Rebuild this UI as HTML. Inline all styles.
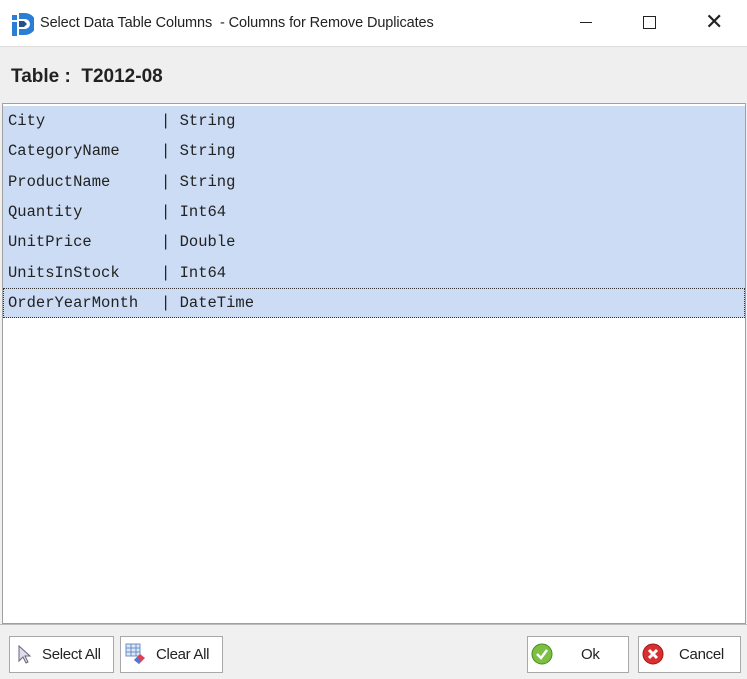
<!DOCTYPE html>
<html><head><style>
*{margin:0;padding:0;box-sizing:border-box}
body{width:747px;height:679px;background:#f0f0f0;position:relative;overflow:hidden;font-family:"Liberation Sans",sans-serif}
.title{position:absolute;left:0;top:0;width:747px;height:47px;background:#fff;border-bottom:1px solid #ddd}
.title .t{position:absolute;left:40px;top:15px;font-size:14.5px;color:#222;letter-spacing:-0.1px}
.hdr{position:absolute;left:0;top:47px;width:747px;height:56px;background:#efefef}
.hdr .t{position:absolute;left:11px;top:19px;font-size:19px;font-weight:bold;color:#222}
.list{position:absolute;left:2px;top:103px;width:744px;height:521px;background:#fff;border:1px solid #a0a0a0}
.sel{position:absolute;left:0;top:2px;width:742px;height:212px;background:#ccdcf4}
.row{position:absolute;left:0;width:742px;height:30px;font-family:"Liberation Mono",monospace;font-size:15.5px;line-height:30px;color:#222;white-space:pre}
.row span{position:absolute}
.foot{position:absolute;left:0;top:624px;width:747px;height:55px;background:#f0f0f0;border-top:1px solid #bbb}
.btn{position:absolute;top:636px;height:37px;background:#fff;border:1px solid #a8a8a8;font-size:15px;color:#222;letter-spacing:-0.3px}
.btn .l{position:absolute;top:9px}
</style></head><body>
<div class="title">
<svg style="position:absolute;left:12px;top:12px" width="22" height="24" viewBox="0 0 22 24"><rect x="0" y="3" width="5" height="5" fill="#2a7fd4"/><rect x="0" y="10" width="5" height="14" fill="#2a7fd4"/><path d="M7 1h6a8 8 0 0 1 0 22h-6v-6h6a2 2 0 0 0 0-10h-6z" fill="#2a7fd4"/><path d="M7 9h5l3 3-3 3h-5z" fill="#2a4e8a"/></svg>
<div class="t">Select Data Table Columns &nbsp;- Columns for Remove Duplicates</div>
<div style="position:absolute;left:580px;top:22px;width:12px;height:1px;background:#222"></div>
<div style="position:absolute;left:643px;top:16px;width:13px;height:13px;border:1px solid #222"></div>
<div style="position:absolute;left:705px;top:9px;font-size:22px;color:#222">✕</div>
</div>
<div class="hdr"><div class="t">Table : &nbsp;T2012-08</div></div>
<div class="list">
<div class="sel"></div>
<div class="row" style="top:2px"><span style="left:5px">City</span><span style="left:158px">| String</span></div>
<div class="row" style="top:32px"><span style="left:5px">CategoryName</span><span style="left:158px">| String</span></div>
<div class="row" style="top:63px"><span style="left:5px">ProductName</span><span style="left:158px">| String</span></div>
<div class="row" style="top:93px"><span style="left:5px">Quantity</span><span style="left:158px">| Int64</span></div>
<div class="row" style="top:123px"><span style="left:5px">UnitPrice</span><span style="left:158px">| Double</span></div>
<div class="row" style="top:154px"><span style="left:5px">UnitsInStock</span><span style="left:158px">| Int64</span></div>
<div class="row" style="top:184px;border:1px dotted #333"><span style="left:4px;top:-1px">OrderYearMonth</span><span style="left:157px;top:-1px">| DateTime</span></div>
</div>
<div class="foot"></div>
<div class="btn" style="left:9px;width:105px"><svg style="position:absolute;left:8px;top:8px" width="14" height="20" viewBox="0 0 14 20"><path d="M1 1v15l4-4 3 6 2-1-3-6h5z" fill="#dde" stroke="#667" stroke-width="1"/></svg><span class="l" style="left:32px">Select All</span></div>
<div class="btn" style="left:120px;width:103px"><svg style="position:absolute;left:4px;top:6px" width="22" height="22" viewBox="0 0 22 22"><rect x="1" y="1" width="14" height="12" fill="#dbe8f8" stroke="#6b8fc8"/><path d="M1 5h14M1 9h14M6 1v12M11 1v12" stroke="#6b8fc8"/><path d="M9 17l6-6 5 4-6 6z" fill="#e04050"/><path d="M9 17l3-3 4 4-2 3z" fill="#4a7ad8"/></svg><span class="l" style="left:35px">Clear All</span></div>
<div class="btn" style="left:527px;width:102px"><svg style="position:absolute;left:3px;top:6px" width="22" height="22" viewBox="0 0 22 22"><circle cx="11" cy="11" r="10" fill="#7cc042" stroke="#4a8a20"/><path d="M6 11l4 4 6-8" stroke="#fff" stroke-width="2.5" fill="none"/></svg><span class="l" style="left:53px">Ok</span></div>
<div class="btn" style="left:638px;width:103px"><svg style="position:absolute;left:3px;top:6px" width="22" height="22" viewBox="0 0 22 22"><circle cx="11" cy="11" r="10" fill="#d83030" stroke="#a01818"/><path d="M7 7l8 8M15 7l-8 8" stroke="#fff" stroke-width="3"/></svg><span class="l" style="left:40px">Cancel</span></div>
</body></html>
